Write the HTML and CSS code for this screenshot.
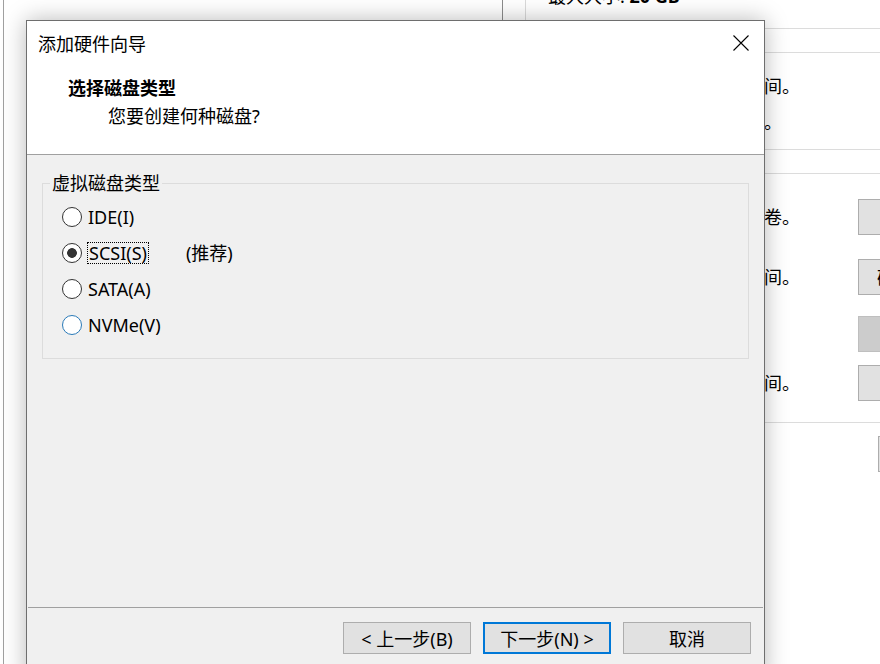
FILE: index.html
```html
<!DOCTYPE html>
<html lang="zh-CN">
<head>
    <meta charset="UTF-8">
    <meta name="viewport" content="width=device-width, initial-scale=1.0">
    <title>添加硬件向导</title>
    <link rel="stylesheet" href="styles.css">
</head>
<body>

    <!-- Settings window behind the wizard -->
    <div class="desk">
        <div class="left-pane"></div>
        <div class="settings">
            <div class="s-head"><span class="s-text">最大大小: <b>20 GB</b></span></div>

            <div class="group g-info">
                <div class="s-line">未预先分配全部所需磁盘空间。</div>
                <div class="s-line">虚拟磁盘已拆分成多个文件。</div>
            </div>

            <div class="group g-tools">
                <div class="tool r1"><span>将虚拟磁盘映射为本地磁盘卷。</span><button class="bg-btn">映射(M)...</button></div>
                <div class="tool r2"><span>整理文件碎片并合并可用空间。</span><button class="bg-btn">碎片整理(D)</button></div>
                <div class="tool r3"><span>扩展磁盘容量。</span><button class="bg-btn disabled">扩展(E)...</button></div>
                <div class="tool r4"><span>压缩磁盘以回收未使用的空间。</span><button class="bg-btn">压缩(C)</button></div>
            </div>

            <div class="adv"><button class="bg-btn">高级(V)...</button></div>
        </div>
    </div>

    <!-- Add hardware wizard -->
    <div class="dialog">
        <div class="titlebar">
            <span class="title">添加硬件向导</span>
            <button class="close" aria-label="关闭">
                <svg width="16" height="16" viewBox="0 0 16 16">
                    <path d="M0.5 0.5 L15.5 15.5 M15.5 0.5 L0.5 15.5" stroke="#000" stroke-width="1.1" fill="none"/>
                </svg>
            </button>
        </div>

        <div class="header">
            <div class="heading">选择磁盘类型</div>
            <div class="subheading">您要创建何种磁盘?</div>
        </div>

        <div class="body">
            <fieldset class="disk-type">
                <legend>虚拟磁盘类型</legend>
                <label class="opt"><input type="radio" name="bus"><span>IDE(I)</span></label>
                <label class="opt"><input type="radio" name="bus" checked><span class="focus">SCSI(S)</span><span class="note">(推荐)</span></label>
                <label class="opt"><input type="radio" name="bus"><span>SATA(A)</span></label>
                <label class="opt"><input type="radio" name="bus" class="hover"><span>NVMe(V)</span></label>
            </fieldset>
        </div>

        <div class="footer">
            <button class="btn">&lt; 上一步(B)</button>
            <button class="btn default">下一步(N) &gt;</button>
            <button class="btn">取消</button>
        </div>
    </div>

</body>
</html>
```

FILE: styles.css
```css
body {
    margin: 0;
    width: 880px;
    height: 664px;
    overflow: hidden;
    background: #fff;
    font-family: "Noto Sans", "Noto Sans CJK SC", sans-serif;
    font-size: 18px;
    color: #000;
    position: relative;
}
button {
    font-family: inherit;
    font-size: 18px;
    color: #000;
}

/* background window */
.desk {
    display: flex;
    height: 664px;
    margin-left: 3px;
    border-left: 1px solid #a0a0a0;
}
.left-pane {
    width: 498px;
    flex-shrink: 0;
    border-right: 1px solid #8c8c8c;
}
.settings {
    width: 500px;
    flex-shrink: 0;
    margin-left: 22px;
    border-left: 1px solid #dadada;
    padding-left: 22px;
    line-height: 24px;
}
.s-head {
    display: flow-root;
    height: 28px;
    border-bottom: 1px solid #dcdcdc;
}
.s-text {
    display: block;
    margin-top: -16px;
}
.group {
    margin-top: 23px;
    border-top: 1px solid #dcdcdc;
    border-bottom: 1px solid #dcdcdc;
}
.g-info {
    padding: 21px 0 15px;
    display: flex;
    flex-direction: column;
    gap: 12px;
}
.g-tools {
    display: flow-root;
    padding-bottom: 21px;
}
.tool {
    display: grid;
    grid-template-columns: 310px 134px;
    align-items: center;
    height: 36px;
}
.r1 { margin-top: 25px; }
.r2 { margin-top: 24px; }
.r3 { margin-top: 21px; }
.r4 { margin-top: 13px; }
.bg-btn {
    width: 134px;
    height: 36px;
    text-align: center;
    padding: 0;
    background: #e1e1e1;
    border: 1px solid #adadad;
    white-space: nowrap;
}
.bg-btn.disabled {
    background: #cccccc;
    border-color: #bfbfbf;
    color: #838383;
}
.adv {
    margin-top: 13px;
    padding-left: 330px;
}

/* wizard dialog */
.dialog {
    position: absolute;
    left: 26px;
    top: 20px;
    width: 737px;
    height: 660px;
    border: 1px solid #6e6e6e;
    background: #f0f0f0;
    display: flex;
    flex-direction: column;
    box-shadow: 0 0 22px rgba(0, 0, 0, 0.28);
}
.titlebar {
    height: 44px;
    flex-shrink: 0;
    display: flex;
    align-items: center;
    justify-content: space-between;
    padding-left: 11px;
    background: #fff;
}
.close {
    width: 46px;
    height: 44px;
    border: none;
    background: none;
    padding: 0;
    display: flex;
    align-items: center;
    justify-content: center;
}
.header {
    height: 89px;
    flex-shrink: 0;
    background: #fff;
    border-bottom: 1px solid #a0a0a0;
    padding-left: 41px;
}
.heading {
    font-weight: bold;
    line-height: 26px;
    padding-top: 10px;
}
.subheading {
    margin-top: 3px;
    line-height: 24px;
    padding-left: 40px;
}
.body {
    flex: 1;
}
.disk-type {
    margin: 16px 15px 0;
    padding: 4px 19px 15px;
    border: 1px solid #dcdcdc;
}
.disk-type legend {
    margin-left: -12px;
    padding: 0 2px;
    line-height: 24px;
}
.opt {
    display: flex;
    align-items: center;
    height: 36px;
    gap: 6px;
    line-height: 20px;
}
.opt input {
    appearance: none;
    margin: 0;
    width: 20px;
    height: 20px;
    border: 1px solid #333;
    border-radius: 50%;
    background: #fff;
}
.opt input:checked {
    background: radial-gradient(circle, #333 0 4.5px, #fff 5.2px);
}
.opt input.hover {
    border-color: #2a7ab8;
}
.focus {
    outline: 1px dotted #000;
    padding: 0 1px;
}
.note {
    margin-left: 32px;
}
.footer {
    height: 74px;
    flex-shrink: 0;
    margin: 0 1px;
    border-top: 1px solid #a0a0a0;
    padding: 14px 12px 0 0;
    box-sizing: border-box;
    display: flex;
    justify-content: flex-end;
    align-items: flex-start;
    gap: 12px;
}
.btn {
    width: 128px;
    height: 32px;
    background: #e1e1e1;
    border: 1px solid #adadad;
    padding: 0;
}
.btn.default {
    border: 2px solid #0078d7;
}
```
